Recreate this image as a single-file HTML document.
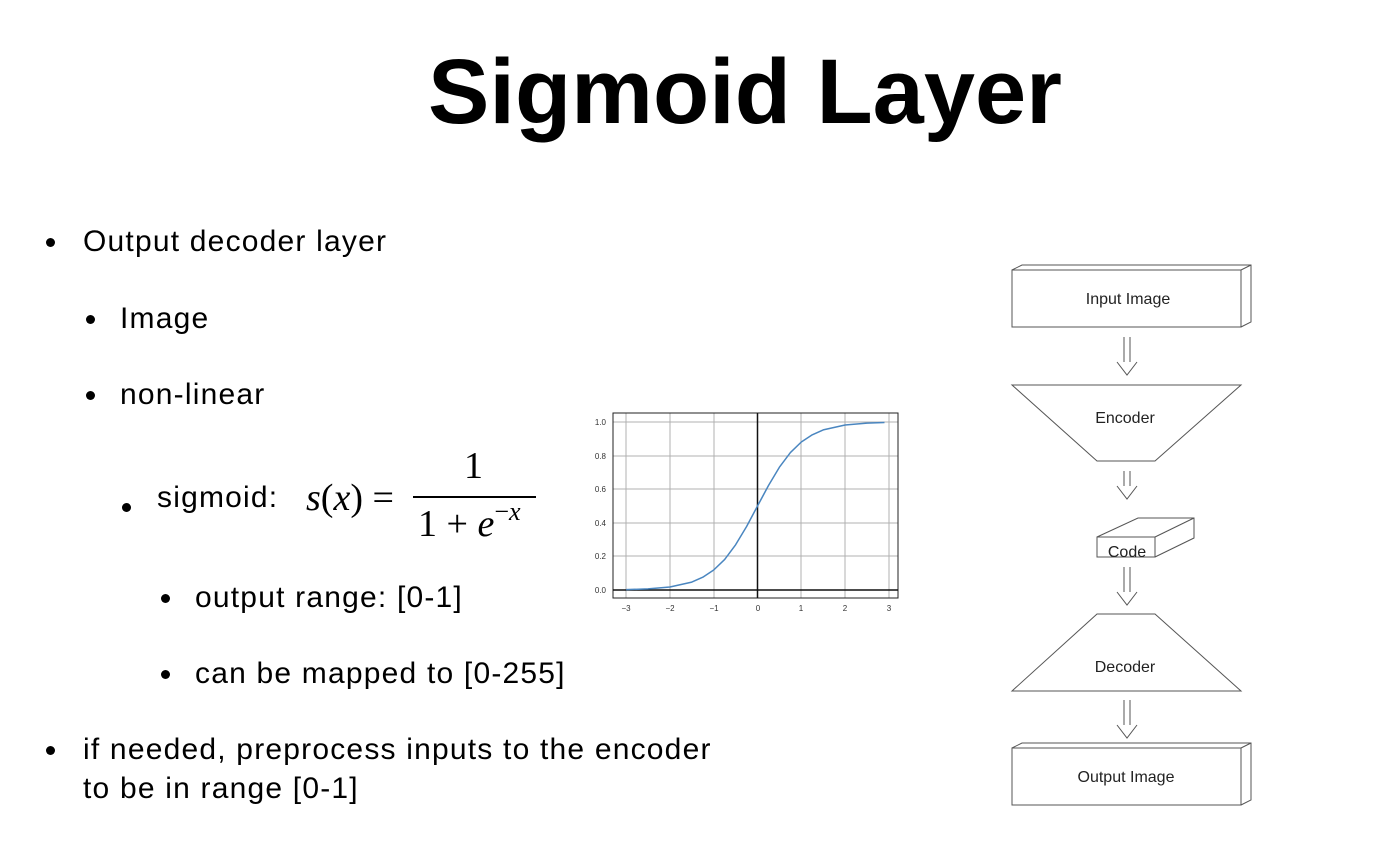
<!DOCTYPE html>
<html><head><meta charset="utf-8"><style>
body{margin:0;width:1374px;height:842px;background:#fff;position:relative;overflow:hidden;font-family:"Liberation Sans",sans-serif;color:#000}
.t{position:absolute;white-space:nowrap;font-size:30px;letter-spacing:1.2px;line-height:1}
.d{position:absolute;width:9px;height:9px;border-radius:50%;background:#000}
</style></head><body>
<div class="t" style="left:0;width:1490px;text-align:center;top:46px;font-size:92px;font-weight:bold;letter-spacing:0;">Sigmoid Layer</div>

<div class="d" style="left:46px;top:238px"></div><div class="t" style="left:83px;top:227px">Output decoder layer</div>
<div class="d" style="left:86px;top:315px"></div><div class="t" style="left:120px;top:304px">Image</div>
<div class="d" style="left:86px;top:391px"></div><div class="t" style="left:120px;top:380px">non-linear</div>
<div class="d" style="left:122px;top:503px"></div><div class="t" style="left:157px;top:483px">sigmoid:</div>
<div class="d" style="left:161px;top:594px"></div><div class="t" style="left:195px;top:583px">output range: [0-1]</div>
<div class="d" style="left:161px;top:670px"></div><div class="t" style="left:195px;top:659px">can be mapped to [0-255]</div>
<div class="d" style="left:46px;top:746px"></div><div class="t" style="left:83px;top:735px">if needed, preprocess inputs to the encoder</div>
<div class="t" style="left:83px;top:774px">to be in range [0-1]</div>

<svg width="1374" height="842" style="position:absolute;left:0;top:0" xmlns="http://www.w3.org/2000/svg">
<g font-family="Liberation Serif,serif" font-size="38">
<text x="306" y="510"><tspan font-style="italic">s</tspan>(<tspan font-style="italic">x</tspan>) =</text>
<text x="464" y="478">1</text>
<line x1="413" y1="497" x2="536" y2="497" stroke="#000" stroke-width="2"/>
<text x="418" y="536">1 + <tspan font-style="italic">e</tspan><tspan font-size="26" dy="-16">−<tspan font-style="italic">x</tspan></tspan></text>
</g>
<g stroke="#b0b0b0" stroke-width="1">
<line x1="626" y1="413" x2="626" y2="598"/><line x1="670" y1="413" x2="670" y2="598"/><line x1="714" y1="413" x2="714" y2="598"/><line x1="801" y1="413" x2="801" y2="598"/><line x1="845" y1="413" x2="845" y2="598"/><line x1="889" y1="413" x2="889" y2="598"/>
<line x1="613" y1="422" x2="898" y2="422"/><line x1="613" y1="456" x2="898" y2="456"/><line x1="613" y1="489" x2="898" y2="489"/><line x1="613" y1="523" x2="898" y2="523"/><line x1="613" y1="556" x2="898" y2="556"/>
</g>
<rect x="613" y="413" width="285" height="185" fill="none" stroke="#222" stroke-width="1"/>
<line x1="757.5" y1="413" x2="757.5" y2="598" stroke="#111" stroke-width="1.5"/>
<line x1="613" y1="590" x2="898" y2="590" stroke="#111" stroke-width="1.5"/>
<polyline fill="none" stroke="#4a86c0" stroke-width="1.5" stroke-linejoin="round" points="626.1,589.6 648,588.9 669.9,587 691.8,582.1 702.8,577.2 713.7,570 724.7,559.4 735.6,544.8 746.6,526.5 757.5,506 768.5,485.5 779.4,467.2 790.4,452.6 801.3,442 812.3,434.8 823.2,429.9 845.1,425 867,423.1 884.5,422.5"/>
<g font-size="8" fill="#333" font-family="Liberation Sans,sans-serif">
<text x="606" y="425" text-anchor="end">1.0</text><text x="606" y="459" text-anchor="end">0.8</text><text x="606" y="492" text-anchor="end">0.6</text><text x="606" y="526" text-anchor="end">0.4</text><text x="606" y="559" text-anchor="end">0.2</text><text x="606" y="593" text-anchor="end">0.0</text>
<text x="626" y="611" text-anchor="middle">−3</text><text x="670" y="611" text-anchor="middle">−2</text><text x="714" y="611" text-anchor="middle">−1</text><text x="758" y="611" text-anchor="middle">0</text><text x="801" y="611" text-anchor="middle">1</text><text x="845" y="611" text-anchor="middle">2</text><text x="889" y="611" text-anchor="middle">3</text>
</g>
<g fill="none" stroke="#555" stroke-width="1">
<rect x="1012" y="270" width="229" height="57"/><polyline points="1012,270 1022,265 1251,265 1251,322 1241,327"/><line x1="1241" y1="270" x2="1251" y2="265"/>
<polygon points="1012,385 1241,385 1155,461 1097,461"/>
<rect x="1097" y="537" width="58" height="20"/><polyline points="1097,537 1138,518 1194,518 1194,538 1155,557"/><line x1="1155" y1="537" x2="1194" y2="518"/>
<polygon points="1097,614 1155,614 1241,691 1012,691"/>
<rect x="1012" y="748" width="229" height="57"/><polyline points="1012,748 1022,743 1251,743 1251,800 1241,805"/><line x1="1241" y1="748" x2="1251" y2="743"/>
</g>
<g fill="none" stroke="#555" stroke-width="1">
<path d="M1124,337V362M1130,337V362M1117,362L1127,375L1137,362"/>
<path d="M1124,471V486M1130,471V486M1117,486L1127,499L1137,486"/>
<path d="M1124,567V592M1130,567V592M1117,592L1127,605L1137,592"/>
<path d="M1124,700V725M1130,700V725M1117,725L1127,738L1137,725"/>
</g>
<g font-family="Liberation Sans,sans-serif" font-size="16" fill="#222" text-anchor="middle">
<text x="1128" y="304">Input Image</text><text x="1125" y="423">Encoder</text><text x="1127" y="557">Code</text><text x="1125" y="672">Decoder</text><text x="1126" y="782">Output Image</text>
</g>
</svg>
</body></html>
